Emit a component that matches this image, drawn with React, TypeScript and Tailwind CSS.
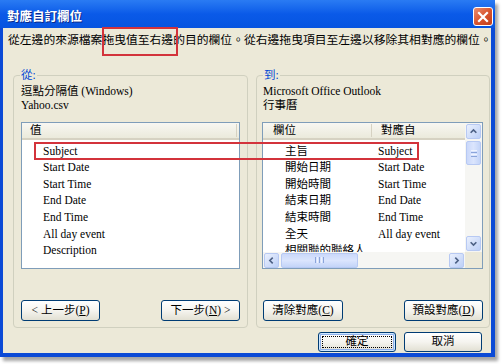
import React from "react";

const leftRows = ["Subject", "Start Date", "Start Time", "End Date", "End Time", "All day event", "Description"];

const rightRows: [string, string][] = [
  ["主旨", "Subject"],
  ["開始日期", "Start Date"],
  ["開始時間", "Start Time"],
  ["結束日期", "End Date"],
  ["結束時間", "End Time"],
  ["全天", "All day event"],
  ["相關聯的聯絡人", ""],
];

const arrows = {
  up: "M4.5 9.5 L8 6 L11.5 9.5",
  down: "M4.5 6.5 L8 10 L11.5 6.5",
  left: "M9.5 4.5 L6 8 L9.5 11.5",
  right: "M6.5 4.5 L10 8 L6.5 11.5",
};

function ScrollBtn({ dir }: { dir: keyof typeof arrows }) {
  return (
    <div className="w-[15px] h-[15px] shrink-0 rounded-[2px] border border-[#b7c9f3] bg-linear-to-br from-[#eaf0fd] to-[#bdd0f7] flex items-center justify-center">
      <svg width="15" height="15" viewBox="0 0 16 16">
        <path d={arrows[dir]} fill="none" stroke="#4d6185" strokeWidth="2" />
      </svg>
    </div>
  );
}

function XpButton({ children, className = "" }: { children: React.ReactNode; className?: string }) {
  return (
    <button className={`h-[21px] rounded-[3px] border border-[#003c74] bg-linear-to-b from-white via-[#f5f4ef] to-[#e2e0d3] text-[11.5px] leading-none text-black flex items-center justify-center ${className}`}>
      {children}
    </button>
  );
}

function ListHeader({ children }: { children: React.ReactNode }) {
  return (
    <div className="h-[17px] shrink-0 flex items-center bg-linear-to-b from-[#f8f7f2] to-[#ebeadb] border-b-2 border-[#d6d2c2] text-[11.5px]">
      {children}
    </div>
  );
}

function Group({ label, line1, line2, children }: { label: string; line1: string; line2: string; children: React.ReactNode }) {
  return (
    <div className="relative flex flex-col h-[253px] rounded-[4px] border border-[#d0d0bf] pt-[8px] pb-[6px]">
      <span className="absolute top-[-8px] left-[6px] px-[1px] bg-[#ece9d8] text-[#0046d5] text-[11.5px] leading-[14px]">{label}</span>
      {children}
    </div>
  );
}

export default function App() {
  return (
    <div className="relative w-[504px] h-[364px] bg-white overflow-hidden text-black font-['Liberation_Serif','Noto_Sans_CJK_TC',serif]">
      <div className="flex flex-col w-[495px] h-[357px] bg-[#0b4ad6] shadow-[3px_4px_3px_rgba(0,0,0,0.35)]">
        {/* title bar */}
        <div className="h-[28px] shrink-0 flex items-start bg-linear-to-b from-[#2a7bf3] via-[#0a5ae8] to-[#0654e0]">
          <span className="mt-[7px] ml-[7px] text-white font-bold text-[12.5px] leading-[18px] font-['Noto_Sans_CJK_TC',sans-serif] [text-shadow:1px_1px_0_#0a2a8a]">
            對應自訂欄位
          </span>
          <div className="ml-auto mt-[7px] mr-[2px] w-[20px] h-[19px] rounded-[3px] border border-white bg-linear-to-br from-[#e88d6e] via-[#d9552f] to-[#c13d1a] flex items-center justify-center">
            <svg width="12" height="12" viewBox="0 0 12 12">
              <path d="M2 2 L10 10 M10 2 L2 10" stroke="white" strokeWidth="2.2" strokeLinecap="square" />
            </svg>
          </div>
        </div>

        {/* client area */}
        <div className="flex-1 ml-[3px] mr-[4px] mb-[4px] bg-[#ece9d8] flex flex-col pt-[4px] pl-[10px] pr-[1px]">
          <p className="h-[14px] leading-[14px] text-[11.8px] -ml-[5px] whitespace-nowrap font-['Noto_Sans_CJK_TC',sans-serif]">
            從左邊的來源檔案拖曳值至右邊的目的欄位。從右邊拖曳項目至左邊以移除其相對應的欄位。
          </p>

          <div className="mt-[29px] flex gap-[8px]">
            {/* from */}
            <div className="w-[235px]">
              <Group label="從:" line1="" line2="">
                <div className="px-[7px] flex flex-col">
                  <div className="text-[11.5px] leading-[14px]">逗點分隔值 (Windows)</div>
                  <div className="text-[11.5px] leading-[14px]">Yahoo.csv</div>
                  <div className="mt-[10px] h-[147px] border border-[#7f9db9] bg-white flex flex-col overflow-hidden">
                    <ListHeader>
                      <span className="pl-[8px] flex-1">值</span>
                      <span className="w-[1px] h-[13px] bg-[#d6d2c2] mr-[2px]" />
                    </ListHeader>
                    <div className="pt-[2.5px] text-[11.5px]">
                      {leftRows.map((r) => (
                        <div key={r} className="h-[16.67px] leading-[16.67px] pl-[21px] whitespace-nowrap">{r}</div>
                      ))}
                    </div>
                  </div>
                  <div className="mt-[31px] flex justify-between">
                    <XpButton className="w-[79px]">&lt; 上一步(<span className="underline">P</span>)</XpButton>
                    <XpButton className="w-[79px]">下一步(<span className="underline">N</span>) &gt;</XpButton>
                  </div>
                </div>
              </Group>
            </div>

            {/* to */}
            <div className="w-[234px]">
              <Group label="到:" line1="" line2="">
                <div className="pl-[5px] pr-[6px] flex flex-col">
                  <div className="pl-[1px] text-[11.5px] leading-[14px] whitespace-nowrap">Microsoft Office Outlook</div>
                  <div className="pl-[1px] text-[11.5px] leading-[14px]">行事曆</div>
                  <div className="mt-[10px] h-[147px] border border-[#7f9db9] bg-white flex flex-col overflow-hidden">
                    <div className="flex-1 flex min-h-0">
                      <div className="flex-1 flex flex-col min-w-0 overflow-hidden">
                        <ListHeader>
                          <span className="w-[108px] pl-[10px]">欄位</span>
                          <span className="w-[1px] h-[13px] bg-[#d6d2c2]" />
                          <span className="pl-[9px]">對應自</span>
                        </ListHeader>
                        <div className="pt-[2.5px] text-[11.5px] overflow-hidden">
                          {rightRows.map(([a, b]) => (
                            <div key={a} className="h-[16.67px] leading-[16.67px] flex whitespace-nowrap">
                              <span className="w-[115px] pl-[22px] shrink-0">{a}</span>
                              <span>{b}</span>
                            </div>
                          ))}
                        </div>
                      </div>
                      <div className="w-[17px] shrink-0 flex flex-col items-center py-[1px] bg-[#f6f6f3]">
                        <ScrollBtn dir="up" />
                        <div className="mt-[2px] w-[15px] h-[24px] rounded-[2px] border border-[#b7c9f3] bg-linear-to-r from-[#cad8fa] via-[#dbe5fd] to-[#c3d4f8] flex flex-col items-center justify-center gap-[1px]">
                          <span className="w-[6px] h-[1px] bg-[#eef3fe]" />
                          <span className="w-[6px] h-[1px] bg-[#8aa4da]" />
                          <span className="w-[6px] h-[1px] bg-[#eef3fe]" />
                          <span className="w-[6px] h-[1px] bg-[#8aa4da]" />
                        </div>
                        <div className="flex-1" />
                        <ScrollBtn dir="down" />
                      </div>
                    </div>
                    <div className="h-[16px] shrink-0 flex items-center bg-[#f6f6f3]">
                      <div className="flex-1 flex items-center px-[1px]">
                        <ScrollBtn dir="left" />
                        <div className="ml-[2px] w-[77px] h-[15px] rounded-[2px] border border-[#b7c9f3] bg-linear-to-b from-[#cad8fa] via-[#dbe5fd] to-[#c3d4f8] flex items-center justify-center gap-[1px]">
                          <span className="w-[1px] h-[6px] bg-[#8aa4da]" />
                          <span className="w-[1px] h-[6px] bg-[#eef3fe]" />
                          <span className="w-[1px] h-[6px] bg-[#8aa4da]" />
                          <span className="w-[1px] h-[6px] bg-[#eef3fe]" />
                          <span className="w-[1px] h-[6px] bg-[#8aa4da]" />
                        </div>
                        <div className="flex-1" />
                        <ScrollBtn dir="right" />
                      </div>
                      <div className="w-[17px] h-[16px] bg-[#ece9d8]" />
                    </div>
                  </div>
                  <div className="mt-[31px] pl-[1px] flex justify-between">
                    <XpButton className="w-[80px]">清除對應(<span className="underline">C</span>)</XpButton>
                    <XpButton className="w-[79px]">預設對應(<span className="underline">D</span>)</XpButton>
                  </div>
                </div>
              </Group>
            </div>
          </div>

          <div className="mt-[4px] pr-[8px] flex justify-end gap-[8px]">
            <button className="w-[78px] h-[20px] rounded-[3px] border border-[#003c74] bg-linear-to-b from-white via-[#f5f4ef] to-[#e2e0d3] shadow-[inset_0_0_0_1px_#cee7ff,inset_0_0_0_2px_#8fb0ea] p-[3px] flex">
              <span className="flex-1 flex items-center justify-center border border-dotted border-black text-[11.5px] leading-none">確定</span>
            </button>
            <XpButton className="w-[78px] !h-[20px]">取消</XpButton>
          </div>
        </div>
      </div>

      {/* red annotation boxes */}
      <div className="absolute left-[102px] top-[27px] w-[76px] h-[29px] border-2 border-[#d3333b]" />
      <div className="absolute left-[34px] top-[142px] w-[385px] h-[18px] border-2 border-[#d3333b]" />
    </div>
  );
}
